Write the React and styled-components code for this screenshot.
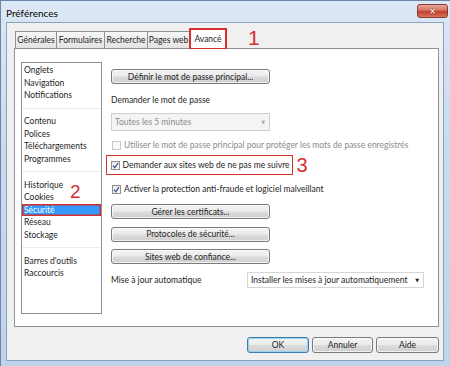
import React from "react"
import styled, { createGlobalStyle, css } from "styled-components"

const Global = createGlobalStyle`
    html, body { margin: 0; padding: 0; }
    body {
        width: 450px;
        height: 366px;
        overflow: hidden;
        font-family: Lato, "Open Sans", sans-serif;
        font-size: 8.5px;
        color: #1e1e1e;
    }
`

const RED = "#d4302c"

const sidebarGroups = [
    ["Onglets", "Navigation", "Notifications"],
    ["Contenu", "Polices", "Téléchargements", "Programmes"],
    ["Historique", "Cookies", "Sécurité", "Réseau", "Stockage"],
    ["Barres d'outils", "Raccourcis"],
]

const tabs = [
    { label: "Générales", w: 42 },
    { label: "Formulaires", w: 49 },
    { label: "Recherche", w: 44 },
    { label: "Pages web", w: 43 },
    { label: "Avancé", w: 38, active: true },
]

const Check = ({ checked, disabled }) => (
    <Box $disabled={disabled}>
        {checked && (
            <svg width="7" height="7" viewBox="0 0 7 7">
                <path d="M1 3.6 L2.8 5.6 L6 1.2" fill="none" stroke="#3d5a9b" strokeWidth="1.3" />
            </svg>
        )}
    </Box>
)

const App = () => {
    return <Window>
        <Global />
        <TitleBar>
            <Title>Préférences</Title>
            <CloseBtn>✕</CloseBtn>
        </TitleBar>
        <Client>
            <TabStrip>
                {tabs.map(t => (
                    <Tab key={t.label} $w={t.w} $active={t.active}>{t.label}</Tab>
                ))}
                <Mark $left={234} $top={-2} $size={21}>1</Mark>
            </TabStrip>
            <Panel>
                <Sidebar>
                    {sidebarGroups.map((g, gi) => (
                        <Group key={gi} $last={gi === sidebarGroups.length - 1}>
                            {g.map(item => (
                                <Item key={item} $selected={item === "Sécurité"}>{item}</Item>
                            ))}
                        </Group>
                    ))}
                    <Mark $left={48} $top={119} $size={19}>2</Mark>
                </Sidebar>
                <Content>
                    <Button $w={159}>Définir le mot de passe principal...</Button>
                    <Label>Demander le mot de passe</Label>
                    <Select $w={159} $h={18} $disabled>
                        <span>Toutes les 5 minutes</span>
                        <Arrow $disabled>▼</Arrow>
                    </Select>
                    <CheckRow $disabled>
                        <Check disabled />
                        Utiliser le mot de passe principal pour protéger les mots de passe enregistrés
                    </CheckRow>
                    <Highlight>
                        <CheckRow>
                            <Check checked />
                            Demander aux sites web de ne pas me suivre
                        </CheckRow>
                        <SideMark>3</SideMark>
                    </Highlight>
                    <CheckRow>
                        <Check checked />
                        Activer la protection anti-fraude et logiciel malveillant
                    </CheckRow>
                    <Buttons>
                        <Button $w={159}>Gérer les certificats...</Button>
                        <Button $w={159}>Protocoles de sécurité...</Button>
                        <Button $w={159}>Sites web de confiance...</Button>
                    </Buttons>
                    <UpdateRow>
                        <span>Mise à jour automatique</span>
                        <Select $w={177} $h={16}>
                            <span>Installer les mises à jour automatiquement</span>
                            <Arrow>▼</Arrow>
                        </Select>
                    </UpdateRow>
                </Content>
            </Panel>
            <Footer>
                <Button $w={62} $h={16} $default>OK</Button>
                <Button $w={61} $h={16}>Annuler</Button>
                <Button $w={63} $h={16}>Aide</Button>
            </Footer>
        </Client>
    </Window>
}

const Window = styled.div`
    width: 450px;
    height: 366px;
    box-sizing: border-box;
    display: flex;
    flex-direction: column;
    padding: 0 6px 5px 5px;
    border-left: 1px solid #6c86a6;
    border-top: 1px solid #6c86a6;
    background: linear-gradient(to bottom, #dbe7f5 0%, #c9dbef 40%, #bfd3ea 100%);
`

const TitleBar = styled.div`
    height: 21px;
    display: flex;
    justify-content: space-between;
    align-items: flex-start;
`

const Title = styled.div`
    font-size: 10px;
    color: #000;
    margin-top: 6px;
    text-shadow: 0 0 6px rgba(255,255,255,0.9);
`

const CloseBtn = styled.div`
    width: 31px;
    height: 14px;
    margin-top: 3px;
    margin-right: -4px;
    box-sizing: border-box;
    border: 1px solid #8a3a30;
    border-radius: 3px;
    background: linear-gradient(to bottom, #e9a99b 0%, #d8705f 45%, #c1402f 55%, #d9735e 100%);
    color: #fff;
    font-family: "DejaVu Sans", sans-serif;
    font-size: 8px;
    font-weight: bold;
    display: flex;
    align-items: center;
    justify-content: center;
    text-shadow: 0 0 2px #6b1a10;
`

const Client = styled.div`
    flex: 1;
    display: flex;
    flex-direction: column;
    background: #f0f0f0;
    border: 1px solid #8ca3be;
    padding: 6px 4px 0 7px;
`

const TabStrip = styled.div`
    position: relative;
    height: 19px;
    display: flex;
    align-items: flex-end;
    padding-left: 1px;
`

const Tab = styled.div`
    width: ${p => p.$w}px;
    height: 17px;
    box-sizing: border-box;
    display: flex;
    align-items: center;
    justify-content: center;
    border: 1px solid #8d9199;
    border-bottom: none;
    margin-right: -1px;
    background: linear-gradient(to bottom, #f6f6f6, #e3e3e3);
    ${p => p.$active && css`
        height: 21px;
        margin-bottom: -1px;
        border: 2px solid ${RED};
        border-bottom: 1px solid ${RED};
        background: #fff;
        position: relative;
        z-index: 1;
    `}
`

const Mark = styled.span`
    position: absolute;
    left: ${p => p.$left}px;
    top: ${p => p.$top}px;
    font-family: "Liberation Sans", sans-serif;
    font-size: ${p => p.$size}px;
    line-height: ${p => p.$size}px;
    color: ${RED};
`

const SideMark = styled.span`
    position: absolute;
    right: -16px;
    top: -1px;
    font-family: "Liberation Sans", sans-serif;
    font-size: 20px;
    line-height: 20px;
    color: ${RED};
`

const Panel = styled.div`
    height: 279px;
    box-sizing: border-box;
    border: 1px solid #8d9199;
    background: #fff;
    display: flex;
    align-items: flex-start;
    padding: 13px 0 0 6px;
    gap: 9px;
`

const Sidebar = styled.div`
    position: relative;
    width: 81px;
    height: 252px;
    box-sizing: border-box;
    border: 1px solid #8f9399;
    padding-top: 1px;
`

const Group = styled.div`
    ${p => !p.$last && css`
        padding-bottom: 6px;
        margin-bottom: 6.5px;
        border-bottom: 1px solid #ececec;
    `}
`

const Item = styled.div`
    height: 12.5px;
    line-height: 12.5px;
    padding-left: 2px;
    white-space: nowrap;
    ${p => p.$selected && css`
        background: #3399ff;
        color: #fff;
        box-shadow: inset 0 0 0 1.5px ${RED};
    `}
`

const Content = styled.div`
    display: flex;
    flex-direction: column;
    align-items: flex-start;
    padding-top: 7px;
`

const Button = styled.div`
    width: ${p => p.$w}px;
    height: ${p => p.$h || 15}px;
    box-sizing: border-box;
    border: 1px solid #7a7a7a;
    border-radius: 3px;
    background: linear-gradient(to bottom, #f3f3f3 0%, #ebebeb 48%, #dcdcdc 52%, #cfcfcf 100%);
    box-shadow: inset 0 0 0 1px rgba(255,255,255,0.7);
    display: flex;
    align-items: center;
    justify-content: center;
    white-space: nowrap;
    ${p => p.$default && css`
        border-color: #3d7bad;
        box-shadow: inset 0 0 0 1px #9ad4f0;
    `}
`

const Label = styled.div`
    line-height: 12px;
    margin-top: 10px;
`

const Select = styled.div`
    width: ${p => p.$w}px;
    height: ${p => p.$h}px;
    box-sizing: border-box;
    border: 1px solid ${p => p.$disabled ? "#cfcfcf" : "#d6d6d6"};
    background: ${p => p.$disabled ? "#f4f4f4" : "#fff"};
    color: ${p => p.$disabled ? "#8c8c8c" : "#1e1e1e"};
    display: flex;
    align-items: center;
    justify-content: space-between;
    padding: 0 4px 0 3px;
    margin-top: 7px;
    white-space: nowrap;
`

const Arrow = styled.span`
    font-family: "DejaVu Sans", sans-serif;
    font-size: 5px;
    color: ${p => p.$disabled ? "#a8a8a8" : "#222"};
`

const Box = styled.span`
    width: 9px;
    height: 9px;
    box-sizing: border-box;
    border: 1px solid ${p => p.$disabled ? "#c9c9c9" : "#8e8f8f"};
    background: ${p => p.$disabled ? "#fafafa" : "linear-gradient(135deg, #e6e6e6, #fbfbfb)"};
    display: inline-flex;
    align-items: center;
    justify-content: center;
    margin-right: 3px;
    flex-shrink: 0;
`

const CheckRow = styled.div`
    display: flex;
    align-items: center;
    height: 12px;
    margin-top: 8px;
    padding-left: 1px;
    white-space: nowrap;
    color: ${p => p.$disabled ? "#8c8c8c" : "#1e1e1e"};
`

const Highlight = styled.div`
    position: relative;
    margin: 4px 0 0 -5px;
    border: 1.5px solid ${RED};
    padding: 3px 2px 3px 2.5px;
    ${CheckRow} { margin-top: 0; }
`

const Buttons = styled.div`
    display: flex;
    flex-direction: column;
    gap: 7.5px;
    margin-top: 9px;
`

const UpdateRow = styled.div`
    display: flex;
    align-items: center;
    width: 313px;
    justify-content: space-between;
    margin-top: 8px;
    ${Select} { margin-top: 0; }
`

const Footer = styled.div`
    display: flex;
    justify-content: flex-end;
    gap: 3px;
    margin-top: 10px;
`

export default App
